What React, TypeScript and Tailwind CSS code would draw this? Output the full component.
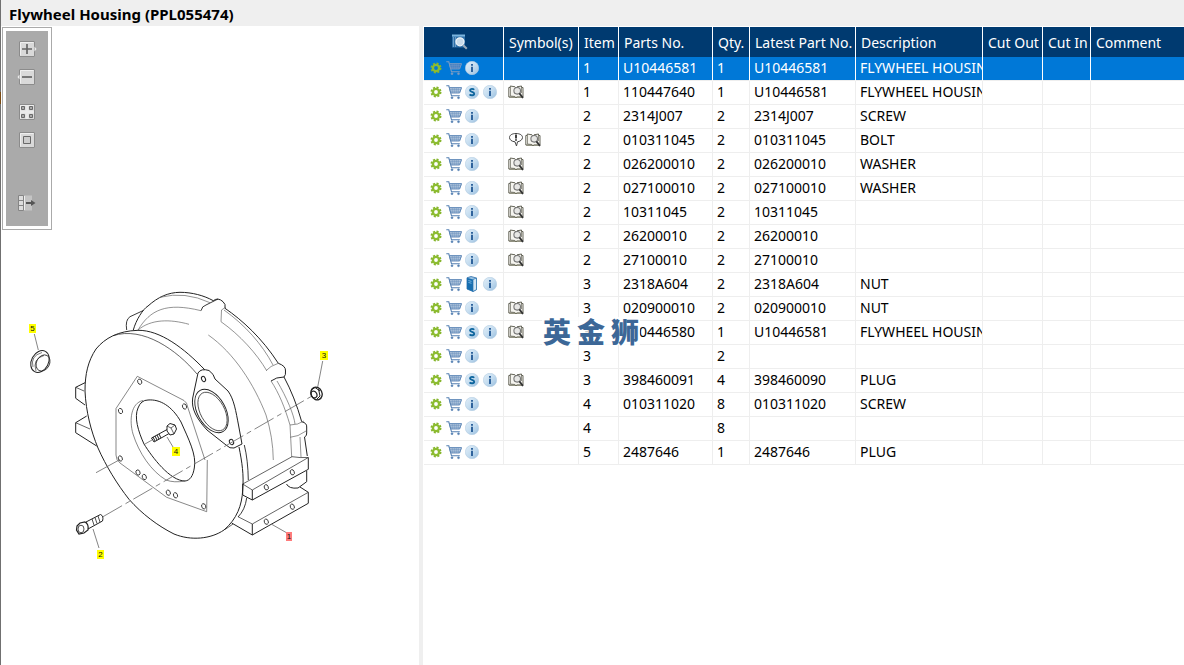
import type { ReactNode } from "react";
import clsx from "clsx";

type Extra = "superseded" | "book";
type Note = "remark" | "lookup";

interface Part {
  item: number;
  partNo: string;
  qty: number;
  latest: string;
  description: string;
  extra?: Extra;
  notes?: Note[];
}

const PARTS: Part[] = [
  { item: 1, partNo: "U10446581", qty: 1, latest: "U10446581", description: "FLYWHEEL HOUSING" },
  { item: 1, partNo: "110447640", qty: 1, latest: "U10446581", description: "FLYWHEEL HOUSING", extra: "superseded", notes: ["lookup"] },
  { item: 2, partNo: "2314J007", qty: 2, latest: "2314J007", description: "SCREW" },
  { item: 2, partNo: "010311045", qty: 2, latest: "010311045", description: "BOLT", notes: ["remark", "lookup"] },
  { item: 2, partNo: "026200010", qty: 2, latest: "026200010", description: "WASHER", notes: ["lookup"] },
  { item: 2, partNo: "027100010", qty: 2, latest: "027100010", description: "WASHER", notes: ["lookup"] },
  { item: 2, partNo: "10311045", qty: 2, latest: "10311045", description: "", notes: ["lookup"] },
  { item: 2, partNo: "26200010", qty: 2, latest: "26200010", description: "", notes: ["lookup"] },
  { item: 2, partNo: "27100010", qty: 2, latest: "27100010", description: "", notes: ["lookup"] },
  { item: 3, partNo: "2318A604", qty: 2, latest: "2318A604", description: "NUT", extra: "book" },
  { item: 3, partNo: "020900010", qty: 2, latest: "020900010", description: "NUT", notes: ["lookup"] },
  { item: 3, partNo: "110446580", qty: 1, latest: "U10446581", description: "FLYWHEEL HOUSING", extra: "superseded", notes: ["lookup"] },
  { item: 3, partNo: "", qty: 2, latest: "", description: "" },
  { item: 3, partNo: "398460091", qty: 4, latest: "398460090", description: "PLUG", extra: "superseded", notes: ["lookup"] },
  { item: 4, partNo: "010311020", qty: 8, latest: "010311020", description: "SCREW" },
  { item: 4, partNo: "", qty: 8, latest: "", description: "" },
  { item: 5, partNo: "2487646", qty: 1, latest: "2487646", description: "PLUG" },
];

const COLUMNS = [
  { label: "Symbol(s)", width: "w-[75px]" },
  { label: "Item", width: "w-10" },
  { label: "Parts No.", width: "w-[94px]" },
  { label: "Qty.", width: "w-[37px]" },
  { label: "Latest Part No.", width: "w-[106px]" },
  { label: "Description", width: "w-[127px]" },
  { label: "Cut Out", width: "w-[60px]" },
  { label: "Cut In", width: "w-12" },
  { label: "Comment", width: "w-auto" },
];

/* ---------- row icons ---------- */

function GearIcon() {
  return (
    <svg viewBox="0 0 12 12" className="h-3 w-3" aria-hidden>
      <circle cx="6" cy="6" r="4.5" fill="none" stroke="#86b52c" strokeWidth="2" strokeDasharray="2 1.53" />
      <circle cx="6" cy="6" r="3.1" fill="none" stroke="#8cbc30" strokeWidth="2.4" />
    </svg>
  );
}

function CartIcon({ light }: { light: boolean }) {
  const color = light ? "#7d9cc2" : "#5580b2";
  return (
    <svg viewBox="0 0 16 16" className="h-4 w-4" fill="none" stroke={color} aria-hidden>
      <path d="M0.3 1.8h2.5l2.7 10h8.3" strokeWidth="1.1" />
      <path d="M3.4 3.600h12.200l-2 5.400H4.800z" fill={light ? "#3d7cc4" : "#c3d2e5"} strokeWidth="0.9" />
      <path d="M6.2 4v5M8.2 4v5M10.2 4v5M12.2 4v5M4.2 5.3h11M4.6 7.2h10" strokeWidth="0.5" />
      <circle cx="6" cy="13.700" r="1" fill={color} strokeWidth="0.500" />
      <circle cx="12.500" cy="13.700" r="1" fill={color} strokeWidth="0.500" />
    </svg>
  );
}

function Disc({ children }: { children: ReactNode }) {
  return (
    <svg viewBox="0 0 14 14" className="h-3.5 w-3.5" aria-hidden>
      <defs>
        <linearGradient id="disc" x1="0" y1="0" x2="1" y2="1">
          <stop offset="0" stopColor="#e3eff8" />
          <stop offset="0.5" stopColor="#c5ddf0" />
          <stop offset="1" stopColor="#97bddd" />
        </linearGradient>
      </defs>
      <circle cx="7" cy="7" r="6.700" fill="url(#disc)" stroke="#b4cde3" strokeWidth="0.600" />
      {children}
    </svg>
  );
}

function InfoIcon() {
  return (
    <Disc>
      <path d="M6 3h2v1.700H6zM6 5.700h2V11H6z" fill="#2f639c" />
    </Disc>
  );
}

function SupersededIcon() {
  return (
    <Disc>
      <path d="M9.2 4.7C8.3 3.6 5 3.3 5 5.3c0 2 4.2 1.2 4.2 3.4 0 2.1-3.6 1.8-4.6.6" fill="none" stroke="#0c649d" strokeWidth="1.8" />
    </Disc>
  );
}

function BookIcon() {
  return (
    <svg viewBox="0 0 12 16" className="h-4 w-3" aria-hidden>
      <path d="M1 1.800 5 .500l5.500 1.500v11.600L7 15.500 1 13z" fill="#9cc4e4" stroke="#2d6da8" strokeWidth="0.8" />
      <path d="M1 1.8 7 3.5v12L1 13z" fill="#176eb0" />
      <path d="M7 3.5 10.5 2v11.6L7 15.5z" fill="#d4e6f4" stroke="#2873ae" strokeWidth="0.7" />
      <path d="M2.4 4.5 5.5 5.4M2.4 6.4l3.1.9" stroke="#8cc2e8" strokeWidth="0.8" />
    </svg>
  );
}

function LookupIcon() {
  return (
    <svg viewBox="0 0 16 16" className="h-4 w-4" fill="none" stroke="#66665a" aria-hidden>
      <path d="M.800 3.500h1.500V2L7 2.800 8 4l1-1.200L13.500 2v1.500H15V13H9l-1 1-1-1H.800z" fill="#f5f4ef" strokeWidth="1" />
      <path d="M2.500 3.500V12l4.500.500M13.500 3.500V9" strokeWidth="0.7" />
      <path d="M1.200 13.200h13" stroke="#77775f" strokeWidth="0.8" />
      <circle cx="9.200" cy="6.800" r="3.300" fill="#e7e7e5" stroke="#777" strokeWidth="1.100" />
      <path d="m11.400 9.400 3.600 4.600" stroke="#333" strokeWidth="1.800" />
    </svg>
  );
}

function RemarkIcon() {
  return (
    <svg viewBox="0 0 16 16" className="h-4 w-4" fill="none" stroke="#444" aria-hidden>
      <path d="M8 1.500c4 0 6.500 1.700 6.500 4s-2.500 4-5 4.300L8.500 14 7 9.800C3.600 9.500 1.500 7.800 1.500 5.500s2.500-4 6.500-4z" fill="#fff" />
      <path d="M8 2.600v3.800M8 7.300v1.500" stroke="#222" strokeWidth="1.700" />
    </svg>
  );
}

function PreviewIcon() {
  return (
    <svg viewBox="0 0 16 16" className="h-4 w-4" aria-hidden>
      <path d="M0 1h13v12.500H0z" fill="#2c6ea8" />
      <path d="M0 .500h13v2H0z" fill="#7ab4de" />
      <path d="M1.500 3.500v9.500M3.500 3.500v9.500" stroke="#a8cbe6" strokeDasharray="1 1" />
      <circle cx="8" cy="7.800" r="4" fill="#c9dbea" stroke="#eef4f9" strokeWidth="1.300" />
      <path d="m11 11 3.800 3.800" stroke="#9aa9b8" strokeWidth="2" />
    </svg>
  );
}

/* ---------- drawing toolbar ---------- */

function ToolButton({ label, gap, children }: { label: string; gap?: string; children: ReactNode }) {
  return (
    <button type="button" aria-label={label} className={clsx("h-4 w-4", gap)}>
      <svg viewBox="0 0 16 16" className="h-4 w-4 overflow-visible">
        {children}
      </svg>
    </button>
  );
}

function ToolFace() {
  return (
    <>
      <rect x="0.500" y="0.500" width="15" height="15" rx="0.500" fill="#d9d9d9" stroke="#8b8b8b" />
      <path d="M1.500 14.500v-13h13" fill="none" stroke="#efefef" />
    </>
  );
}

function DrawingToolbar() {
  return (
    <div className="mt-px ml-px w-[50px] border border-[#aaaaaa] bg-white p-[3px]">
      <div className="flex flex-col items-center bg-[#aaaaaa] pt-[10px] pb-[15px]">
        <ToolButton label="Zoom in">
          <ToolFace />
          <path d="m15.500 5.500 2 2.500-2 2.500z" fill="#eee" />
          <path d="M8 3v10M3 8h10" stroke="#666" strokeWidth="1.700" />
        </ToolButton>
        <ToolButton label="Zoom out" gap="mt-3">
          <ToolFace />
          <path d="m.500 5.500-2 2.500 2 2.500z" fill="#eee" />
          <path d="M3 8h10" stroke="#666" strokeWidth="1.700" />
        </ToolButton>
        <ToolButton label="Fit to window" gap="mt-[19px]">
          <ToolFace />
          <path d="M6.500 1h3v14h-3zM1 6.500h14v3H1z" fill="#eaeaea" />
          <path d="M2.500 2.500h3v3h-3zM10.500 2.500h3v3h-3zM2.500 10.500h3v3h-3zM10.500 10.500h3v3h-3z" fill="#aaa" stroke="#696969" />
        </ToolButton>
        <ToolButton label="Actual size" gap="mt-3">
          <ToolFace />
          <path d="M4.500 4.500h7v7h-7z" fill="#ccc" stroke="#696969" />
        </ToolButton>
        <ToolButton label="Detach drawing" gap="mt-[47px]">
          <path d="M5 .500h8v15H5z" fill="#c4c4c4" />
          <path d="M-.500.500h5v15h-5zM-.500 5.500h5M-.500 10.500h5" fill="#ddd" stroke="#858585" />
          <path d="M5.500 1v14" stroke="#eee" />
          <path d="M7 8h6" stroke="#555" strokeWidth="2" />
          <path d="m12 5 4.500 3-4.500 3z" fill="#555" />
        </ToolButton>
      </div>
    </div>
  );
}

/* ---------- exploded view ---------- */

const HOLES = [
  [139.7, 381.7],
  [184.5, 406.5],
  [120.5, 411],
  [120.3, 458.5],
  [138, 472.5],
  [144.3, 477],
  [168.3, 492.7],
  [175.5, 495.3],
  [203.7, 506.3],
  [266.3, 487.3],
  [292.3, 472.3],
  [266.3, 521.7],
  [292.3, 506.7],
];

const CALLOUTS = [
  { n: 5, x: 29, y: 324, w: 7, fill: "#ffff00" },
  { n: 3, x: 320, y: 351, w: 8, fill: "#ffff00" },
  { n: 4, x: 172, y: 447, w: 8, fill: "#ffff00" },
  { n: 2, x: 97, y: 550, w: 7, fill: "#ffff00" },
  { n: 1, x: 286, y: 532, w: 6, fill: "#ff7b7b" },
];

function HousingDrawing() {
  return (
    <svg viewBox="1 280 360 290" className="mt-[50px] h-[290px] w-[360px]" fill="none" stroke="#222" role="img" aria-label="Flywheel housing exploded view">
      {/* rear shell */}
      <path d="M133.300 330C136 320 143 309 148 306C158 297 168 292.500 180 292.300C192 292.300 204 295.500 213.300 300.700Q218 297 223 301.700Q226 304 225 308.300C242 320 262 338 278.300 363.300Q286 366 285.500 371Q286 375 284 377C291 390 297 405 301.700 421.700Q307 423 306.700 427V433Q307 436 304.500 437L307.300 456" />
      <path d="M126.700 330Q125 320 130 316.700L143.300 310.500M201 310.700Q202 306 206 305L218 299" strokeWidth="0.900" />
      <g stroke="#666" strokeWidth="0.700">
        <path d="M160 297.300Q185 291 210 302.700M138 330C150 310 166 302 201 310.700M138 330C151 319 170 319 189 324.300" />
        <path d="M226 307L221.500 310L221 321.700C240 335 257 354 266.700 370.700M271 381C279 393 285 408 290 425L291.700 457" />
        <path d="M224 310C245 325 262 344 273 365M208.300 335C234 353 254 384 266 415Q273 437 273.300 460M277 381C287 398 294 415 295 424" />
        <path d="M266 370.700Q270 366 278.300 363.300M290 425Q298 425 304 421M290 437.300Q298 437 306 431M300 437L301 457" />
      </g>
      <path d="M271 381Q276 377 284 377" />

      {/* mounting feet */}
      <path d="M85 382.700L75.700 387.300V398.300L85 405M86.700 416L75.700 422.700V432.700L96.700 446" />
      <path d="M75.700 387.300L84 391M75.700 422.700L90 429" strokeWidth="0.700" />
      <path d="M242.700 484V495L252.300 500L308.300 469.300V457.500M252.300 490V500M252.300 524V535L308.300 503.300V492.300L300 487M252.300 535L231.700 523M306.700 471V481.700L298 488Q289 489 286.500 484" />
      <path d="M242.700 484L292 456.700Q300 458 308.300 457.500L252.300 490ZM238 516.700L252.300 524L308.300 492.300" strokeWidth="0.700" />

      {/* front flange */}
      <path d="M205 370C184 348 160 330 138 330.300C118 331 105 338 96 349C88 361 85 374 85 391C86 412 91 431 98 448C106 466 117 484 129 499.300C142 514 158 526 174 534C191 541 211 539 224 530C237 519 242 505 242.700 490C244 475 242 462 239 447" />
      <path d="M113 335.700C143 326 177 350 197 374M225 529.500L233 524" strokeWidth="0.700" />
      <path d="M244.300 445Q248 460 248.300 480M246.700 498Q245 510 238 517" strokeWidth="0.900" />

      {/* cover plate and bore */}
      <path d="M205 460L188 408Q187 402 184 400.500L137.300 376.300L116 408.500V455Q116 460 120 463L166.700 497.300L206.700 511.700L207.300 460" stroke="#555" strokeWidth="0.700" />
      <path d="M148 400C160 399 172 406 181 422C188 438 197 455 194.300 468C193 476 190 480.500 185 481C170 481 152 457 144 444C138 431 134 417 138 408Q141 400 148 400Z" />
      <path d="M143 400.500C131 403 129 420 133 434C139 453 151 471 166 480Q174 483 185 481" stroke="#555" strokeWidth="0.700" />

      {/* starter flange */}
      <path d="M198 373Q201 368 209 370.500Q214 374 215 379L228 391C234 399 236 412 238.500 425L242 444L234 448Q230 449 226 445L207 430C197 419 191 409 192.700 398Z" fill="#fff" />
      <ellipse cx="211.500" cy="411" rx="14" ry="23.500" transform="rotate(-29 211.500 411)" strokeWidth="0.900" />
      <ellipse cx="212.500" cy="411.500" rx="12" ry="21" transform="rotate(-29 212.500 411.500)" strokeWidth="0.700" />
      <ellipse cx="203.500" cy="379" rx="1.900" ry="2.700" transform="rotate(-25 203.500 379)" />
      <ellipse cx="231.500" cy="442" rx="2" ry="2.700" transform="rotate(-25 231.500 442)" />

      {HOLES.map(([x, y]) => (
        <ellipse key={`${x}-${y}`} cx={x} cy={y} rx="2" ry="2.700" transform={`rotate(-20 ${x} ${y})`} strokeWidth="0.800" />
      ))}

      {/* assembly axes and leaders */}
      <g stroke="#666" strokeWidth="0.800">
        <path d="M103 516.700L312 396" strokeDasharray="22 4 5 4" />
        <path d="M96 472.700L120 459.500M145 444L152 440" />
        <path d="M34.300 334L38.300 350M322.700 361L317.700 387M167 437L173 447M93 529L99 548M271.700 524.300L287 533" />
      </g>

      {/* item 2, screw */}
      <path d="M86 522L100.500 514.500Q104 516 102.500 521L88 529Z" fill="#fff" />
      <path d="M92 519L94 525M95 517.500L97 523.500M98 516L100 522" strokeWidth="0.800" />
      <path d="M77 526L80 523L85 522Q89 524 88 530L84 533L79 534L76.500 530Z" fill="#fff" strokeWidth="1.200" />
      <ellipse cx="81" cy="529" rx="3" ry="3.800" strokeWidth="0.800" />

      {/* item 4, screw */}
      <path d="M151.500 438L168 429L170 433L154 442Z" fill="#fff" />
      <path d="M153 437L155 441M155 436L157 440M157 435L159 439M159 434L161 438" />
      <path d="M167 426L170 423.500L175 425L176.500 429L174 434L170 435L167 431Z" fill="#fff" />
      <path d="M167 426L171 428L174 434M171 428L175 425" strokeWidth="0.700" />

      {/* item 3, nut */}
      <ellipse cx="316.500" cy="393.500" rx="5.500" ry="6.500" transform="rotate(-25 316.500 393.500)" fill="#fff" strokeWidth="1.300" />
      <path d="M311 390L315 387.500L320 391M318.500 389L320 396L317 399" />
      <ellipse cx="314" cy="394.500" rx="2.800" ry="3.500" transform="rotate(-25 314 394.500)" strokeWidth="1.200" />

      {/* item 5, plug */}
      <ellipse cx="40" cy="361.500" rx="8.500" ry="11.500" transform="rotate(28 40 361.500)" fill="#fff" />
      <ellipse cx="43" cy="363" rx="6.500" ry="8.500" transform="rotate(28 43 363)" strokeWidth="0.800" />
      <path d="M33 367Q30 356 42 352.500M36 371Q32 359 44 355.500" strokeWidth="0.600" />

      {CALLOUTS.map((c) => (
        <g key={c.n} stroke="none">
          <rect x={c.x} y={c.y} width={c.w} height="9" fill={c.fill} />
          <text x={c.x + c.w / 2} y={c.y + 7} textAnchor="middle" fill="#111" fontSize="8" fontFamily="Liberation Sans, sans-serif">
            {c.n}
          </text>
        </g>
      ))}
    </svg>
  );
}

/* ---------- parts list ---------- */

function RowAction({ label, children }: { label: string; children: ReactNode }) {
  return (
    <button type="button" aria-label={label} className="flex h-4 w-[18px] items-center justify-center">
      {children}
    </button>
  );
}

function PartRow({ part, selected }: { part: Part; selected: boolean }) {
  const cell = clsx(
    "h-6 overflow-hidden border-r border-b px-1 pt-0 pb-0.5 whitespace-nowrap last:border-r-0",
    selected ? "border-r-white border-b-[#eeeeee]" : "border-[#eeeeee]",
  );
  return (
    <tr className={selected ? "bg-[#0078d7] text-white" : "text-black"} aria-selected={selected}>
      <td className={clsx(cell, "pl-[3px]")}>
        <div className="flex items-center">
          <RowAction label="Options">
            <GearIcon />
          </RowAction>
          <RowAction label="Add to cart">
            <CartIcon light={selected} />
          </RowAction>
          {part.extra && (
            <RowAction label={part.extra === "book" ? "Open bulletin" : "Superseded part"}>
              {part.extra === "book" ? <BookIcon /> : <SupersededIcon />}
            </RowAction>
          )}
          <RowAction label="Part information">
            <InfoIcon />
          </RowAction>
        </div>
      </td>
      <td className={cell}>
        <div className="flex items-center">
          {part.notes?.map((note) => (
            <span key={note} className="w-[17px]">
              {note === "remark" ? <RemarkIcon /> : <LookupIcon />}
            </span>
          ))}
        </div>
      </td>
      <td className={cell}>{part.item}</td>
      <td className={cell}>{part.partNo}</td>
      <td className={cell}>{part.qty}</td>
      <td className={cell}>{part.latest}</td>
      <td className={cell}>{part.description}</td>
      <td className={cell} />
      <td className={cell} />
      <td className={cell} />
    </tr>
  );
}

function PartsTable() {
  return (
    <table className="w-full table-fixed border-separate border-spacing-0 text-sm leading-5">
      <thead>
        <tr className="bg-[#003a70] text-left text-white">
          <th className="h-[30px] w-20 border-r border-white p-0">
            <div className="flex justify-center pr-2">
              <PreviewIcon />
            </div>
          </th>
          {COLUMNS.map((col) => (
            <th key={col.label} scope="col" className={clsx("border-r border-white p-0 pt-0.5 pl-[5px] font-normal whitespace-nowrap last:border-r-0", col.width)}>
              {col.label}
            </th>
          ))}
        </tr>
      </thead>
      <tbody>
        {PARTS.map((part, i) => (
          <PartRow key={i} part={part} selected={i === 0} />
        ))}
      </tbody>
    </table>
  );
}

function Watermark() {
  return (
    <div className="pointer-events-none absolute top-[291px] left-[119px] flex h-7 items-center gap-1.5 bg-white/80 px-px font-['Noto_Sans_CJK_SC',sans-serif] text-[28px] leading-7 font-black text-[#3c6797]">
      <span>英</span>
      <span>金</span>
      <span>狮</span>
    </div>
  );
}

export default function App() {
  return (
    <div className="flex min-h-screen bg-white font-['Noto_Sans',sans-serif]">
      <div className="flex w-px shrink-0 flex-col bg-[#707070] pt-[92px]">
        <div className="h-3 bg-[#7a4a12]" />
      </div>
      <div className="flex min-w-0 flex-1 flex-col">
        <header className="h-[26px] bg-[#efefef] pl-2">
          <h1 className="text-[15px] leading-7 font-bold text-black">Flywheel Housing (PPL055474)</h1>
        </header>
        <main className="flex flex-1">
          <section className="w-[418px] shrink-0" aria-label="Drawing">
            <DrawingToolbar />
            <HousingDrawing />
          </section>
          <div className="w-1 shrink-0 bg-[#efefef]" />
          <section className="relative min-w-0 flex-1 pt-px pl-px" aria-label="Parts list">
            <PartsTable />
            <Watermark />
          </section>
        </main>
      </div>
    </div>
  );
}
